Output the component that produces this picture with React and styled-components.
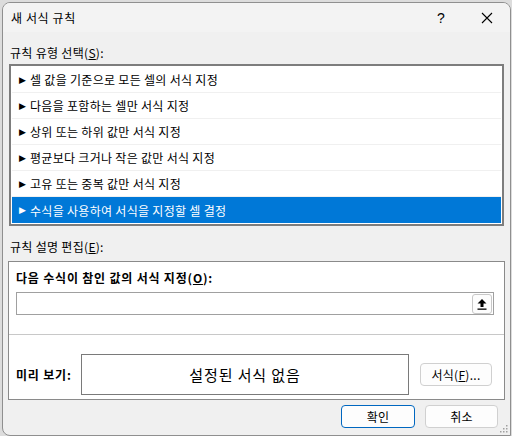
import styled, { createGlobalStyle } from "styled-components";

const GlobalStyle = createGlobalStyle`
  html, body {
    margin: 0;
    padding: 0;
    background: #dcdcdc;
  }
  body {
    font-family: "Noto Sans CJK KR", "Noto Sans", sans-serif;
    font-size: 12px;
    letter-spacing: 0.3px;
    color: #000;
  }
`;

const Window = styled.div`
  position: relative;
  box-sizing: border-box;
  margin: 2px 0 0 2px;
  width: 509px;
  height: 434px;
  border: 1px solid #8f8f8f;
  border-radius: 8px 8px 0 8px;
  background: #f0f0f0;
  overflow: hidden;
  display: flex;
  flex-direction: column;
`;

const TitleBar = styled.div`
  height: 29px;
  flex-shrink: 0;
  display: flex;
  align-items: center;
  background: #f3f3f3;
`;

const Title = styled.span`
  flex: 1;
  padding-left: 8px;
  font-size: 12px;
  letter-spacing: 0.6px;
`;

const TitleButton = styled.div`
  width: 46px;
  height: 29px;
  display: flex;
  align-items: center;
  justify-content: center;
  font-family: "Liberation Sans", sans-serif;
  font-size: 14px;
`;

const Label = styled.div`
  margin: ${(p) => p.$margin};
  height: 16px;
  line-height: 16px;
  padding-left: 7px;
  font-weight: ${(p) => (p.$bold ? 700 : 400)};
  letter-spacing: ${(p) => (p.$bold ? "0.8px" : "0.3px")};
`;

const U = styled.span`
  text-decoration: underline;
  text-underline-offset: 1px;
`;

const RuleList = styled.div`
  box-sizing: border-box;
  margin: 0 0 0 6px;
  width: 495px;
  border: 2px solid #7d7d7d;
  padding: 1px;
  background: #fff;
`;

const RuleRow = styled.div`
  box-sizing: border-box;
  height: 26px;
  display: flex;
  align-items: center;
  padding-left: 7px;
  border-bottom: 1px solid ${(p) => (p.$selected ? "#0078d7" : "#f0f0f0")};
  background: ${(p) => (p.$selected ? "#0078d7" : "#fff")};
  color: ${(p) => (p.$selected ? "#fff" : "#000")};

  &:last-child {
    border-bottom: none;
  }
`;

const Arrow = styled.span`
  font-family: "DejaVu Sans", sans-serif;
  font-size: 9px;
  width: 11px;
`;

const Panel = styled.div`
  box-sizing: border-box;
  margin: 6px 0 0 5px;
  width: 497px;
  height: 139px;
  flex-shrink: 0;
  border: 1px solid #8a8a8a;
  background: #fff;
  display: flex;
  flex-direction: column;
`;

const FormulaInput = styled.div`
  box-sizing: border-box;
  margin: 6px 10px 0 7px;
  height: 23px;
  border: 1px solid #a0a0a0;
  display: flex;
  justify-content: flex-end;
  align-items: center;
  padding-right: 1px;
`;

const RefButton = styled.div`
  box-sizing: border-box;
  width: 20px;
  height: 20px;
  border: 1px solid #c8c8c8;
  border-radius: 3px;
  background: #fdfdfd;
  display: flex;
  align-items: center;
  justify-content: center;
`;

const Divider = styled.div`
  margin-top: 19px;
  height: 1px;
  background: #c8c8c8;
`;

const PreviewRow = styled.div`
  display: flex;
  align-items: center;
  margin-top: 19px;
  padding-left: 7px;
`;

const PreviewLabel = styled.span`
  width: 65px;
  font-weight: 700;
  letter-spacing: 0.8px;
`;

const PreviewBox = styled.div`
  box-sizing: border-box;
  width: 328px;
  height: 41px;
  border: 1px solid #7a7a7a;
  display: flex;
  align-items: center;
  justify-content: center;
  font-size: 15px;
  letter-spacing: 0.9px;
`;

const Button = styled.div`
  box-sizing: border-box;
  width: ${(p) => p.$width}px;
  height: ${(p) => p.$height || 23}px;
  margin-left: ${(p) => p.$gap || 0}px;
  border: 1px solid ${(p) => (p.$primary ? "#0067c0" : "#d0d0d0")};
  border-radius: 4px;
  background: #fdfdfd;
  display: flex;
  align-items: center;
  justify-content: center;
`;

const Footer = styled.div`
  display: flex;
  justify-content: flex-end;
  margin-top: 5px;
  padding-right: 12px;
`;

const Grip = styled.svg`
  position: absolute;
  right: 1px;
  bottom: 1px;
`;

const rules = [
  "셀 값을 기준으로 모든 셀의 서식 지정",
  "다음을 포함하는 셀만 서식 지정",
  "상위 또는 하위 값만 서식 지정",
  "평균보다 크거나 작은 값만 서식 지정",
  "고유 또는 중복 값만 서식 지정",
  "수식을 사용하여 서식을 지정할 셀 결정",
];

export default function App() {
  return (
    <>
      <GlobalStyle />
      <Window>
        <TitleBar>
          <Title>새 서식 규칙</Title>
          <TitleButton>?</TitleButton>
          <TitleButton>
            <svg width="12" height="12" viewBox="0 0 12 12">
              <path d="M1 1 L11 11 M11 1 L1 11" stroke="#000" strokeWidth="1.1" />
            </svg>
          </TitleButton>
        </TitleBar>

        <Label $margin="13px 0 3px 0">
          규칙 유형 선택(<U>S</U>):
        </Label>

        <RuleList>
          {rules.map((r, i) => (
            <RuleRow key={r} $selected={i === rules.length - 1}>
              <Arrow>▶</Arrow>
              {r}
            </RuleRow>
          ))}
        </RuleList>

        <Label $margin="13px 0 0 0">
          규칙 설명 편집(<U>E</U>):
        </Label>

        <Panel>
          <Label $margin="8px 0 0 0" $bold>
            다음 수식이 참인 값의 서식 지정(<U>O</U>):
          </Label>
          <FormulaInput>
            <RefButton>
              <svg width="10" height="12" viewBox="0 0 10 12">
                <path d="M5 1 L9.5 5.5 L6.5 5.5 L6.5 9 L3.5 9 L3.5 5.5 L0.5 5.5 Z" fill="#000" />
                <rect x="0.5" y="10.5" width="9" height="1.3" fill="#000" />
              </svg>
            </RefButton>
          </FormulaInput>
          <Divider />
          <PreviewRow>
            <PreviewLabel>미리 보기:</PreviewLabel>
            <PreviewBox>설정된 서식 없음</PreviewBox>
            <Button $width={72} $gap={11}>
              서식(<U>F</U>)...
            </Button>
          </PreviewRow>
        </Panel>

        <Footer>
          <Button $width={74} $primary>
            확인
          </Button>
          <Button $width={73} $gap={10}>
            취소
          </Button>
        </Footer>

        <Grip width="10" height="10" viewBox="0 0 10 10">
          {[
            [8, 2],
            [8, 5],
            [5, 5],
            [8, 8],
            [5, 8],
            [2, 8],
          ].map(([x, y]) => (
            <rect key={`${x}-${y}`} x={x - 1} y={y - 1} width="1.5" height="1.5" fill="#a0a0a0" />
          ))}
        </Grip>
      </Window>
    </>
  );
}
